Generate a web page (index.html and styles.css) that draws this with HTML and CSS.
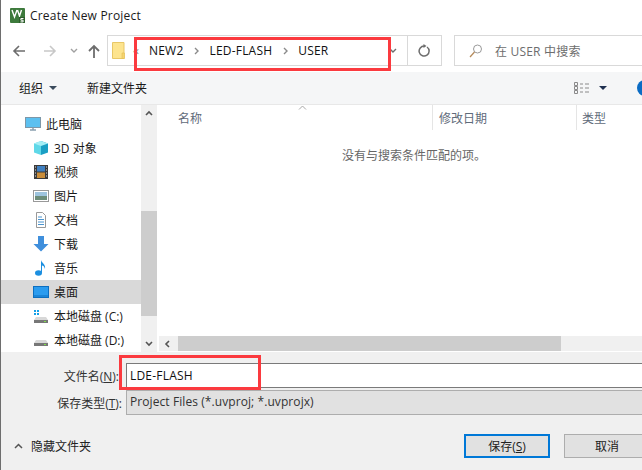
FILE: index.html
```html
<!DOCTYPE html>
<html>
<head>
  <title>Create New Project</title>
  <link rel="stylesheet" href="styles.css">
</head>
<body>
  <div class="dialog">
    <div class="titlebar">
      <svg class="app-icon" width="15" height="15" viewBox="0 0 15 15">
        <rect width="15" height="15" rx="1" fill="#3d7a3c"/>
        <path d="M2 2l2.500 7L7 2M7.500 2l2 6 2-6" fill="none" stroke="#fff" stroke-width="1.400"/>
        <rect x="9" y="9" width="6" height="6" fill="#2d5f2c"/>
        <path d="M13.500 10.500h-2.600v1.700h2.200v1.700h-2.600" fill="none" stroke="#fff" stroke-width="1"/>
      </svg>
      <span>Create New Project</span>
    </div>

    <div class="navbar">
      <svg class="nav-btn" width="16" height="16" viewBox="0 0 16 16"><path d="M14 8H3M8 3L3 8l5 5" fill="none" stroke="#6d6d6d" stroke-width="1.600"/></svg>
      <svg class="nav-btn fwd" width="16" height="16" viewBox="0 0 16 16"><path d="M2 8h11M8 3l5 5-5 5" fill="none" stroke="#c8c8c8" stroke-width="1.600"/></svg>
      <svg class="nav-btn caret" width="8" height="6" viewBox="0 0 8 6"><path d="M1 1l3 3 3-3" fill="none" stroke="#a0a0a0" stroke-width="1.400"/></svg>
      <svg class="nav-btn up" width="16" height="16" viewBox="0 0 16 16"><path d="M8 15V3M3 8l5-5 5 5" fill="none" stroke="#6d6d6d" stroke-width="1.800"/></svg>

      <div class="address">
        <svg class="folder" width="13" height="17" viewBox="0 0 13 17">
          <path d="M.5.500h11.500v16H.5z" fill="#fde48e" stroke="#e8c766"/>
          <path d="M10 11h2.500v5.500H10z" fill="#f6d56f" stroke="#e3bd55" stroke-width=".6"/>
        </svg>
        <span class="more">«</span>
        <span class="crumb">NEW2</span>
        <svg class="sep" width="5" height="8" viewBox="0 0 5 8"><path d="M1 1l3 3-3 3" fill="none" stroke="#8a8a8a" stroke-width="1.400"/></svg>
        <span class="crumb">LED-FLASH</span>
        <svg class="sep" width="5" height="8" viewBox="0 0 5 8"><path d="M1 1l3 3-3 3" fill="none" stroke="#8a8a8a" stroke-width="1.400"/></svg>
        <span class="crumb">USER</span>
        <svg class="addr-caret" width="8" height="6" viewBox="0 0 8 6"><path d="M1 1l3 3 3-3" fill="none" stroke="#6d6d6d" stroke-width="1.400"/></svg>
        <div class="refresh">
          <svg width="13" height="13" viewBox="0 0 13 13"><path d="M9 3a5 5 0 1 1-2.500-.9" fill="none" stroke="#6d6d6d" stroke-width="1.500"/><path d="M5.500 0l3 2-3 2z" fill="#6d6d6d"/></svg>
        </div>
      </div>

      <div class="search">
        <svg width="14" height="14" viewBox="0 0 14 14"><circle cx="8.500" cy="5" r="4" fill="none" stroke="#9a9a9a"/><path d="M5.500 8L1 13" stroke="#b58a5a" stroke-width="1.200"/></svg>
        <span>在 USER 中搜索</span>
      </div>
    </div>

    <div class="toolbar">
      <span class="tool">组织</span>
      <span class="tool-caret"></span>
      <span class="tool new-folder">新建文件夹</span>
      <svg class="view-icon" width="16" height="13" viewBox="0 0 16 13">
        <path d="M.5.500h3v3h-3zM.500 4.500h3v3h-3zM.500 8.500h3v3h-3z" fill="none" stroke="#8a8a8a"/>
        <path d="M6 2h3M11 2h4M6 6h3M11 6h4M6 10h3M11 10h4" stroke="#8a8a8a"/>
      </svg>
      <span class="tool-caret dark"></span>
      <span class="help"></span>
    </div>

    <div class="browser">
      <div class="sidebar">
        <ul class="tree">
          <li class="top">
            <svg width="16" height="14" viewBox="0 0 16 14"><rect x=".5" y=".5" width="15" height="10" fill="#5cc0f0" stroke="#7d97a8"/><path d="M5 13h6M8 11v2" stroke="#8aa0b0" stroke-width="1.500"/></svg>
            此电脑
          </li>
          <li>
            <svg width="16" height="16" viewBox="0 0 16 16"><path d="M8 1l7 2.500v9L8 15z" fill="#1a9fc4"/><path d="M8 1L1 3.500v9L8 15z" fill="#5fd8e8"/><path d="M1 3.500L8 6l7-2.500L8 1z" fill="#a5eef5"/></svg>
            3D 对象
          </li>
          <li>
            <svg width="16" height="16" viewBox="0 0 16 16"><rect x="1" y="1" width="14" height="14" fill="#3a3a3a"/><rect x="4" y="2" width="8" height="5.500" fill="#3f7fc0"/><rect x="4" y="8.500" width="8" height="5.500" fill="#c98d3a"/><path d="M2 3h1M2 6h1M2 9h1M2 12h1M13 3h1M13 6h1M13 9h1M13 12h1" stroke="#ddd"/></svg>
            视频
          </li>
          <li>
            <svg width="16" height="14" viewBox="0 0 16 14"><rect x=".5" y="1.500" width="15" height="11" fill="#fff" stroke="#999"/><rect x="2" y="3" width="12" height="4" fill="#9ec4de"/><rect x="2" y="7" width="12" height="4" fill="#6d8d7a"/></svg>
            图片
          </li>
          <li>
            <svg width="16" height="16" viewBox="0 0 16 16"><path d="M3.500.500h6l3 3v12h-9z" fill="#fff" stroke="#999"/><path d="M5 5h4M5 7.500h6M5 10h6M5 12.500h6" stroke="#4a94cf"/></svg>
            文档
          </li>
          <li>
            <svg width="16" height="16" viewBox="0 0 16 16"><path d="M5 0h6v8h4.500L8 15.500.500 8H5z" fill="#3f8fdc"/></svg>
            下载
          </li>
          <li>
            <svg width="16" height="16" viewBox="0 0 16 16"><ellipse cx="5.500" cy="13" rx="3.500" ry="2.800" fill="#1c8fe0"/><path d="M8 13V0c.5 3 5 4 4 9-.5-2.500-2-3.500-3-3.500V13z" fill="#1c8fe0"/></svg>
            音乐
          </li>
          <li class="selected">
            <svg width="16" height="12" viewBox="0 0 16 12"><rect x=".5" y=".5" width="15" height="11" fill="#2b9cef" stroke="#0d6fc0"/><path d="M1 10h14" stroke="#0d6fc0"/></svg>
            桌面
          </li>
          <li>
            <svg width="16" height="16" viewBox="0 0 16 16"><path d="M1 2h2v2H1zM4 2h2v2H4zM1 5h2v2H1zM4 5h2v2H4z" fill="#14a0e8"/><path d="M3 9h10l2 3v3H1v-3z" fill="#d8d8d8"/><rect x="1" y="12" width="14" height="3" fill="#777"/><rect x="11" y="13" width="2" height="1" fill="#7fe04a"/></svg>
            本地磁盘 (C:)
          </li>
          <li>
            <svg width="16" height="16" viewBox="0 0 16 16"><path d="M3 8h10l2 3v3H1v-3z" fill="#d8d8d8"/><rect x="1" y="11" width="14" height="3" fill="#777"/><rect x="11" y="12" width="2" height="1" fill="#7fe04a"/></svg>
            本地磁盘 (D:)
          </li>
        </ul>
      </div>

      <div class="vscroll">
        <svg class="arrow" width="8" height="6" viewBox="0 0 8 6"><path d="M1 5l3-3 3 3" fill="none" stroke="#555" stroke-width="1.600"/></svg>
        <div class="vtrack"><div class="vthumb"></div></div>
        <svg class="arrow" width="8" height="6" viewBox="0 0 8 6"><path d="M1 1l3 3 3-3" fill="none" stroke="#555" stroke-width="1.600"/></svg>
      </div>

      <div class="files">
        <div class="file-head">
          <span class="col col-name">名称</span>
          <span class="col col-date">修改日期</span>
          <span class="col col-type">类型</span>
          <svg class="sort" width="9" height="5" viewBox="0 0 9 5"><path d="M1 4.500l3.500-3.500 3.500 3.500" fill="none" stroke="#a8a8a8"/></svg>
        </div>
        <div class="empty">没有与搜索条件匹配的项。</div>
        <div class="hscroll">
          <svg class="harrow" width="6" height="8" viewBox="0 0 6 8"><path d="M5 1L2 4l3 3" fill="none" stroke="#555" stroke-width="1.600"/></svg>
          <div class="hthumb"></div>
        </div>
      </div>
    </div>

    <div class="form">
      <div class="form-row name-row">
        <label class="form-label">文件名(<u>N</u>):</label>
        <div class="field">LDE-FLASH</div>
      </div>
      <div class="form-row">
        <label class="form-label">保存类型(<u>T</u>):</label>
        <div class="field combo">Project Files (*.uvproj; *.uvprojx)</div>
      </div>
      <div class="actions">
        <span class="hide-folders">
          <svg width="9" height="6" viewBox="0 0 9 6"><path d="M1 5l3.500-3.500L8 5" fill="none" stroke="#555" stroke-width="1.500"/></svg>
          隐藏文件夹
        </span>
        <button class="btn primary">保存(<u>S</u>)</button>
        <button class="btn">取消</button>
      </div>
    </div>

    <div class="mark mark-path"></div>
    <div class="mark mark-name"></div>
  </div>
</body>
</html>
```

FILE: styles.css
```css
* {
  box-sizing: border-box;
}

html, body {
  margin: 0;
  padding: 0;
}

body {
  width: 642px;
  height: 470px;
  overflow: hidden;
  font-family: "Open Sans", "Noto Sans CJK SC", sans-serif;
  font-size: 12px;
  color: #1a1a1a;
}

.dialog {
  position: relative;
  width: 642px;
  height: 470px;
  overflow: hidden;
  background: #fff;
  border-left: 1px solid #6e6e6e;
  display: flex;
  flex-direction: column;
}

.titlebar {
  height: 33px;
  flex: none;
  display: flex;
  align-items: center;
  gap: 5px;
  padding: 0 0 3px 9px;
  letter-spacing: .2px;
}

.navbar {
  height: 39px;
  flex: none;
  display: flex;
  align-items: center;
  padding: 0 0 4px 10px;
}

.nav-btn {
  flex: none;
}

.fwd {
  margin-left: 15px;
}

.caret {
  margin-left: 12px;
}

.up {
  margin-left: 8px;
}

.address {
  width: 335px;
  height: 31px;
  margin-left: 5px;
  flex: none;
  display: flex;
  align-items: center;
  border: 1px solid #d9d9d9;
  color: #111;
}

.folder {
  margin-left: 4px;
  flex: none;
}

.more {
  margin-left: 8px;
  width: 16px;
  flex: none;
  color: #8a8a8a;
}

.crumb {
  letter-spacing: .2px;
}

.sep {
  margin: 0 10.5px;
  flex: none;
}

.addr-caret {
  margin-left: auto;
  margin-right: 10px;
  flex: none;
}

.refresh {
  width: 34px;
  height: 29px;
  flex: none;
  display: flex;
  align-items: center;
  justify-content: center;
  border-left: 1px solid #d9d9d9;
}

.search {
  width: 200px;
  height: 31px;
  margin-left: 12px;
  flex: none;
  display: flex;
  align-items: center;
  gap: 12px;
  padding-left: 14px;
  border: 1px solid #d9d9d9;
  border-right: 0;
  color: #6d6d6d;
  letter-spacing: .2px;
}

.toolbar {
  height: 33px;
  flex: none;
  display: flex;
  align-items: center;
  padding-left: 18px;
  background: #f5f6f7;
  border-bottom: 1px solid #e8e8e8;
  white-space: nowrap;
}

.tool {
  flex: none;
}

.tool-caret {
  width: 0;
  height: 0;
  flex: none;
  margin-left: 6px;
  border: 4px solid transparent;
  border-top: 4px solid #3a4a5c;
  border-bottom: 0;
}

.tool-caret.dark {
  margin-left: 9px;
  border-top-color: #1f3050;
}

.new-folder {
  margin-left: 30px;
}

.view-icon {
  flex: none;
  margin-left: 427px;
}

.help {
  width: 16px;
  height: 16px;
  margin-left: 30px;
  flex: none;
  border-radius: 50%;
  background: #0a6cc4;
}

.browser {
  height: 247px;
  flex: none;
  display: flex;
  background: #fff;
}

.sidebar {
  width: 140px;
  flex: none;
  overflow: hidden;
  height: 247px;
}

.tree {
  list-style: none;
  margin: 0;
  padding: 7px 0 0;
}

.tree li {
  height: 24px;
  display: flex;
  align-items: center;
  gap: 5px;
  padding-left: 32px;
  white-space: nowrap;
}

.tree li.top {
  padding-left: 24px;
}

.tree li.selected {
  background: #d9d9d9;
}

.vscroll {
  width: 16px;
  flex: none;
  display: flex;
  flex-direction: column;
  align-items: center;
  background: #f0f0f0;
}

.arrow {
  flex: none;
  margin: 5px 0;
}

.vtrack {
  flex: 1;
  width: 100%;
  padding-top: 90px;
}

.vthumb {
  height: 105px;
  background: #cdcdcd;
}

.files {
  flex: 1;
  min-width: 0;
  margin-left: 2px;
  display: flex;
  flex-direction: column;
  position: relative;
}

.file-head {
  height: 25px;
  flex: none;
  display: flex;
  align-items: center;
  color: #5f6b7a;
}

.col {
  height: 100%;
  display: flex;
  align-items: center;
  padding-left: 6px;
  flex: none;
  border-right: 1px solid #e5e5e5;
}

.col-name {
  width: 274px;
  padding-left: 19px;
}

.col-date {
  width: 144px;
}

.col-type {
  width: 70px;
  padding-left: 5px;
}

.sort {
  position: absolute;
  left: 139px;
  top: 0;
}

.empty {
  flex: 1;
  padding: 16px 0 0 27px;
  text-align: center;
  color: #666;
}

.hscroll {
  height: 15px;
  margin-bottom: 1px;
  flex: none;
  display: flex;
  align-items: center;
  background: #f0f0f0;
}

.harrow {
  margin-left: 5px;
  flex: none;
}

.hthumb {
  width: 383px;
  height: 15px;
  margin-left: 8px;
  background: #cdcdcd;
}

.form {
  flex: 1;
  background: #f0f0f0;
  padding-top: 11px;
}

.form-row {
  display: flex;
  align-items: center;
  height: 25px;
}

.name-row {
  margin-bottom: 2px;
}

.form-label {
  width: 125px;
  flex: none;
  padding-right: 4px;
  text-align: right;
  color: #333;
}

.name-row .form-label {
  padding-right: 7px;
}

.field {
  flex: 1;
  height: 25px;
  padding-left: 3px;
  line-height: 23px;
  background: #fff;
  border-top: 1px solid #7a7a7a;
  border-bottom: 1px solid #7a7a7a;
  border-left: 1px solid #7a7a7a;
  color: #111;
  letter-spacing: .2px;
}

.combo {
  background: #e1e1e1;
  border-color: #adadad;
  color: #333;
  line-height: 22px;
  letter-spacing: .08px;
}

.actions {
  display: flex;
  align-items: center;
  margin-top: 19px;
  padding-left: 13px;
}

.hide-folders {
  display: flex;
  align-items: center;
  gap: 8px;
  width: 450px;
  flex: none;
  color: #222;
}

.btn {
  width: 86px;
  height: 24px;
  flex: none;
  padding: 0;
  font: inherit;
  color: #222;
  background: #e1e1e1;
  border: 1px solid #adadad;
}

.btn.primary {
  border: 2px solid #0078d7;
  margin-right: 14px;
}

.mark {
  position: absolute;
  border: 3px solid #fb3a3f;
  pointer-events: none;
}

.mark-path {
  left: 133px;
  top: 37px;
  width: 257px;
  height: 34px;
}

.mark-name {
  left: 118px;
  top: 355px;
  width: 142px;
  height: 35px;
}
```
